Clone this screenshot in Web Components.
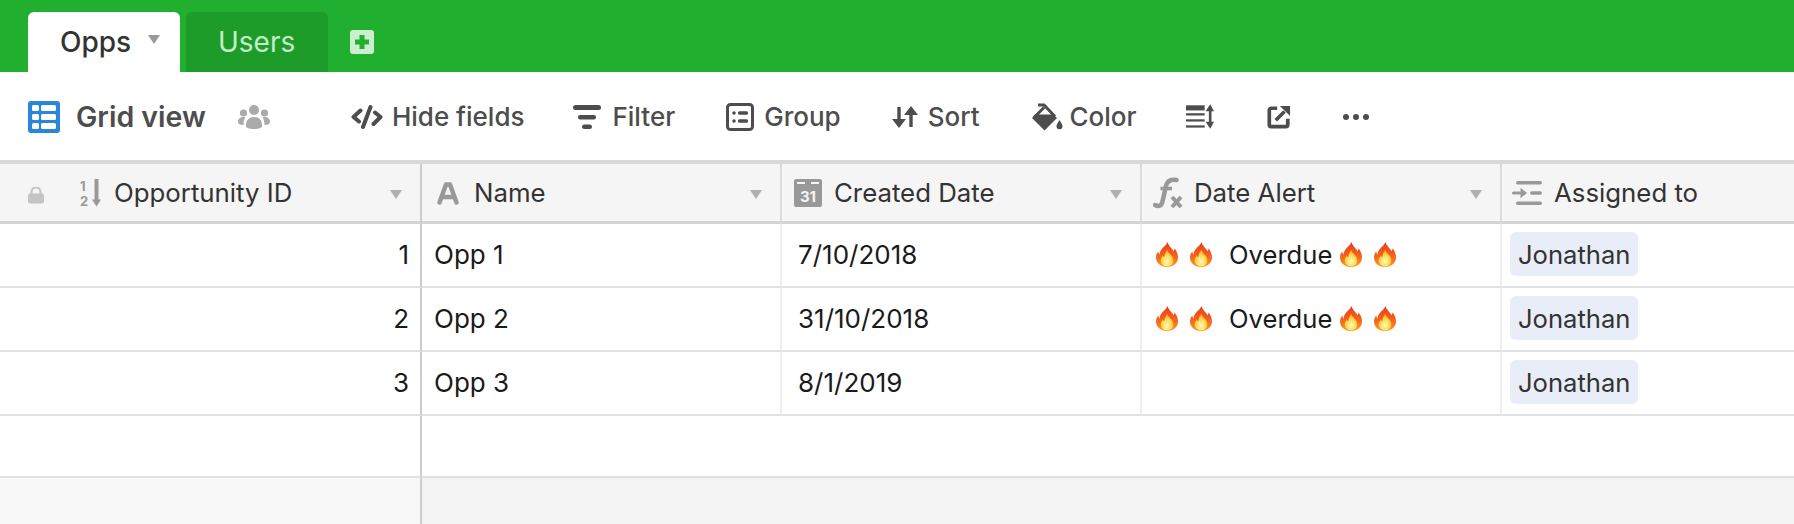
<!DOCTYPE html>
<html>
<head>
<meta charset="utf-8">
<title>Opps</title>
<style>
  html, body { margin: 0; height: 100%; overflow: hidden; background: #fff; }
  body { font-family: Inter, "Noto Sans", "Liberation Sans", sans-serif; }
</style>
</head>
<body>
<app-shell>
  <tab-bar>
    <tab-item active caret>Opps</tab-item>
    <tab-item>Users</tab-item>
  </tab-bar>
  <view-bar>
    <bar-button icon="hide" w="32" h="24" gap="9" ml="81">Hide fields</bar-button>
    <bar-button icon="filter" w="28" h="24" gap="11" ml="49">Filter</bar-button>
    <bar-button icon="group" w="28" h="28" gap="10" ml="51">Group</bar-button>
    <bar-button icon="sort" w="26" h="24" gap="10" ml="51">Sort</bar-button>
    <bar-button icon="color" w="32" h="28" gap="7" ml="51">Color</bar-button>
    <bar-button icon="rowheight" w="28" h="25" gap="0" ml="49"></bar-button>
    <bar-button icon="share" w="24" h="24" gap="0" ml="53"></bar-button>
    <bar-button icon="dots" w="26" h="6" gap="0" ml="52"></bar-button>
  </view-bar>
  <data-grid>
    <grid-head icon="number" iw="24" ih="32" gap="10" pad="80" lock>Opportunity ID</grid-head>
    <grid-head icon="text" iw="22" ih="24" gap="15" pad="15">Name</grid-head>
    <grid-head icon="date" iw="28" ih="28" gap="12" pad="12">Created Date</grid-head>
    <grid-head icon="formula" iw="30" ih="32" gap="11" pad="11">Date Alert</grid-head>
    <grid-head icon="link" iw="30" ih="24" gap="12" pad="10" last>Assigned to</grid-head>

    <grid-cell num>1</grid-cell><grid-cell>Opp 1</grid-cell><grid-cell date>7/10/2018</grid-cell>
    <grid-cell alert><overdue-flag></overdue-flag></grid-cell>
    <grid-cell pill last><name-pill>Jonathan</name-pill></grid-cell>

    <grid-cell num>2</grid-cell><grid-cell>Opp 2</grid-cell><grid-cell date>31/10/2018</grid-cell>
    <grid-cell alert><overdue-flag></overdue-flag></grid-cell>
    <grid-cell pill last><name-pill>Jonathan</name-pill></grid-cell>

    <grid-cell num>3</grid-cell><grid-cell>Opp 3</grid-cell><grid-cell date>8/1/2019</grid-cell>
    <grid-cell alert></grid-cell>
    <grid-cell pill last><name-pill>Jonathan</name-pill></grid-cell>
  </data-grid>
</app-shell>

<script>
const ICONS = {
  plus: `<rect width="24" height="24" rx="3" fill="#c9efcf"/><path d="M12 5v14M5 12h14" stroke="#20af2e" stroke-width="5"/>`,
  grid: `<rect width="32" height="32" rx="3" fill="#2b86d8"/><g fill="#fff"><rect x="4" y="4" width="7" height="6" rx="1.5"/><rect x="13" y="4" width="15" height="6" rx="1.5"/><rect x="4" y="13" width="7" height="6" rx="1.5"/><rect x="13" y="13" width="15" height="6" rx="1.5"/><rect x="4" y="22" width="7" height="6" rx="1.5"/><rect x="13" y="22" width="15" height="6" rx="1.5"/></g>`,
  users: `<g fill="#aaa"><circle cx="16" cy="5" r="5"/><circle cx="5.5" cy="8" r="3.6"/><circle cx="26.5" cy="8" r="3.6"/><path d="M8 21c0-6 3-9 8-9s8 3 8 9c0 2-3 3-8 3s-8-1-8-3z"/><path d="M0 17c0-3 2-5 5.5-5 1 0 1.5.2 2 .5C6 14.5 5.5 17 5.5 20 2 20 0 19 0 17z"/><path d="M32 17c0-3-2-5-5.5-5-1 0-1.5.2-2 .5 1.500 2 2 4.500 2 7.500 3.500 0 5.500-1 5.500-3z"/></g>`,
  hide: `<g fill="none" stroke="#4d4d4d" stroke-width="4" stroke-linecap="round" stroke-linejoin="round"><path d="M9.500 5.500 2.500 12l5.500 4.500"/><path d="M22.500 19 29.500 12l-5.500-4.500"/><path d="M19.500 2 12 22"/></g>`,
  filter: `<g fill="#4d4d4d"><rect width="28" height="5" rx="2.500"/><rect x="5" y="10" width="18" height="4.500" rx="2.200"/><rect x="9" y="19.500" width="10" height="4.500" rx="2.200"/></g>`,
  group: `<rect x="1.500" y="1.500" width="25" height="25" rx="3" fill="none" stroke="#4d4d4d" stroke-width="3"/><g fill="#4d4d4d"><circle cx="8" cy="10" r="1.800"/><circle cx="8" cy="18" r="1.800"/><rect x="12" y="8.300" width="10" height="3.400" rx="1.500"/><rect x="12" y="16.300" width="10" height="3.400" rx="1.500"/></g>`,
  sort: `<g fill="none" stroke="#4d4d4d" stroke-width="3.400"><path d="M7 2v19"/><path d="M19 22V3"/></g><g fill="#4d4d4d"><path d="M0 14h14l-7 9z"/><path d="M12 10h14l-7-9z"/></g>`,
  color: `<path d="M7 2h6l11 11.500M13 4.500 3 14.500" fill="none" stroke="#4d4d4d" stroke-width="3"/><path d="M4 11.500h18l4 3.500-12.500 12.500L1 15z" fill="#4d4d4d"/><path d="M28.500 17c1.300 2.500 3 4.300 3 6.300a3 3 0 0 1-6 0c0-2 1.700-3.800 3-6.300z" fill="#4d4d4d"/>`,
  rowheight: `<g fill="#4d4d4d"><rect width="20" height="5.500" y="1"/><rect width="20" height="2.400" y="9.500"/><rect width="20" height="2.400" y="16"/><rect width="20" height="2.400" y="22.500"/><rect x="24.500" y="3" width="2.800" height="20"/><path d="M21 7.500 25.900 0l4.100 7.500z"/><path d="M21 18.500 25.900 26l4.100-7.500z"/></g>`,
  share: `<path d="M11 3.500H4.500a2 2 0 0 0-2 2v16a2 2 0 0 0 2 2h16a2 2 0 0 0 2-2V15" fill="none" stroke="#4d4d4d" stroke-width="4"/><path d="M9.500 16.500 19 7" stroke="#4d4d4d" stroke-width="4" fill="none"/><path d="M14 1h11v11z" fill="#4d4d4d"/>`,
  dots: `<g fill="#4d4d4d"><circle cx="3" cy="3" r="3"/><circle cx="13" cy="3" r="3"/><circle cx="23" cy="3" r="3"/></g>`,
  lock: `<path d="M3.500 7V5a4.500 4.500 0 0 1 9 0v2" fill="none" stroke="#c4c4c4" stroke-width="2.200"/><rect y="6.500" width="16" height="10" rx="2" fill="#c4c4c4"/>`,
  number: `<text x="0" y="11.500" font-size="13" font-weight="700" fill="#999" font-family="Inter, sans-serif">1</text><text x="0" y="27" font-size="13" font-weight="700" fill="#999" font-family="Inter, sans-serif">2</text><rect x="14.500" y="0" width="4" height="22" fill="#999"/><path d="M12 20.500h9l-4.500 7z" fill="#999"/>`,
  text: `<path d="M2.500 21.500 9 3.500h4l6.500 18M6 16h10" fill="none" stroke="#999" stroke-width="4.500" stroke-linecap="round" stroke-linejoin="round"/>`,
  date: `<rect width="28" height="28" rx="2" fill="#999"/><rect x="3" y="3" width="8" height="2" fill="#f5f5f5"/><rect x="17" y="3" width="8" height="2" fill="#f5f5f5"/><text x="14" y="22.500" text-anchor="middle" font-size="15" font-weight="700" fill="#f5f5f5" font-family="Inter, sans-serif">31</text>`,
  formula: `<path d="M2 28c3.500 2 6.500 1 7.500-3.500L13 9c1.200-5.500 5-7 10.500-6" fill="none" stroke="#999" stroke-width="4.500" stroke-linecap="round"/><path d="M7.500 11.500h11.500" stroke="#999" stroke-width="3.600"/><path d="m19 20 9 10M28 20l-9 10" stroke="#999" stroke-width="4" fill="none"/>`,
  link: `<g fill="#999"><rect x="4" y="0" width="26" height="3.600" rx="1.800"/><rect x="4" y="20.400" width="26" height="3.600" rx="1.800"/><rect x="18" y="10.200" width="12" height="3.600" rx="1.800"/><rect x="0" y="10.400" width="10" height="3.200" rx="1.600"/><path d="M8.500 6.800 15 12l-6.500 5.200z"/></g>`,
  flame: `<defs><linearGradient id="fl" x1="0" y1="0" x2="0" y2="1"><stop offset="0" stop-color="#ea3c1c"/><stop offset=".6" stop-color="#f7661c"/><stop offset="1" stop-color="#fd9a22"/></linearGradient><radialGradient id="fi" cx=".5" cy=".7" r=".62"><stop offset="0" stop-color="#fff8c0"/><stop offset=".6" stop-color="#ffdc50"/><stop offset="1" stop-color="#fca524"/></radialGradient></defs><path d="M12 0c1 4 4 6 6.500 9.500.6-1 .8-2 .8-3 2.400 3 3.700 6 3.700 9.500C23 22 18.500 26 11.500 26S0 22 0 16c0-2.500 1-4.500 2.500-6.500 0 1.500.3 2.600 1.200 3.500C4 7 10 5 12 0z" fill="url(#fl)"/><path d="M12 8c.5 3 2.800 4.300 4.300 6.300 1 1.300 1.900 3 1.900 5 0 3.700-3 6.200-6.700 6.200S4.800 23 4.800 19.400c0-2 1.200-3.800 2.400-5 .4 1 .9 1.500 1.500 1.800C8.600 13 10.400 10 12 8z" fill="url(#fi)"/>`
};

function svgIcon(name, w, h) {
  const box = { plus: '0 0 24 24', grid: '0 0 32 32', users: '0 0 32 24', hide: '0 0 32 24', filter: '0 0 28 24',
    group: '0 0 28 28', sort: '0 0 26 24', color: '0 0 32 28', rowheight: '0 0 30 26', share: '0 0 26 26', dots: '0 0 26 6',
    lock: '0 0 16 17', number: '0 -2 24 32', text: '0 0 22 24', date: '0 0 28 28', formula: '0 0 30 32', link: '0 0 30 24', flame: '0 0 23 26' }[name];
  return `<svg xmlns="http://www.w3.org/2000/svg" width="${w}" height="${h}" viewBox="${box}" style="display:block;flex:none">${ICONS[name]}</svg>`;
}

class AppShell extends HTMLElement {
  constructor() {
    super();
    this.attachShadow({ mode: 'open' });
    this.shadowRoot.innerHTML = `
      <style>
        :host { display: flex; flex-direction: column; height: 524px; overflow: hidden; }
      </style>
      <slot></slot>
    `;
  }
}

class TabBar extends HTMLElement {
  constructor() {
    super();
    this.attachShadow({ mode: 'open' });
    this.shadowRoot.innerHTML = `
      <style>
        :host { display: flex; align-items: flex-end; height: 72px; flex: none; background: #20af2e; padding-left: 28px; box-sizing: border-box; }
        .add { align-self: flex-start; margin: 30px 0 0 22px; }
      </style>
      <slot></slot>
      <div class="add">${svgIcon('plus', 24, 24)}</div>
    `;
  }
}

class TabItem extends HTMLElement {
  constructor() {
    super();
    this.attachShadow({ mode: 'open' });
    this.shadowRoot.innerHTML = `
      <style>
        :host { display: flex; align-items: center; height: 60px; box-sizing: border-box; width: 142px; margin-left: 6px; padding: 0 0 1px 32px;
          background: #1e9c2a; color: #c1eec7; font-size: 28px; border-radius: 6px 6px 0 0; }
        :host([active]) { width: 152px; margin-left: 0; background: #fff; color: #333; font-weight: 500; }
        .caret { display: none; margin-left: 17px; margin-top: -4px; width: 0; height: 0; border-left: 6.5px solid transparent; border-right: 6.5px solid transparent; border-top: 9px solid #999; }
        :host([caret]) .caret { display: block; }
      </style>
      <slot></slot><span class="caret"></span>
    `;
  }
}

class ViewBar extends HTMLElement {
  constructor() {
    super();
    this.attachShadow({ mode: 'open' });
    this.shadowRoot.innerHTML = `
      <style>
        :host { display: flex; align-items: center; height: 88px; flex: none; box-sizing: border-box; padding: 1px 0 0 28px; background: #fff; color: #4d4d4d; }
        .name { font-size: 28.5px; font-weight: 600; margin-left: 16px; }
        .users { margin-left: 32px; }
      </style>
      ${svgIcon('grid', 32, 32)}
      <span class="name">Grid view</span>
      <span class="users">${svgIcon('users', 32, 24)}</span>
      <slot></slot>
    `;
  }
}

class BarButton extends HTMLElement {
  connectedCallback() {
    if (this.shadowRoot) return;
    this.attachShadow({ mode: 'open' });
    const a = (n) => this.getAttribute(n);
    this.shadowRoot.innerHTML = `
      <style>
        :host { display: flex; align-items: center; gap: ${a('gap')}px; margin-left: ${a('ml')}px; font-size: 26px; font-weight: 500; color: #4d4d4d; white-space: nowrap; }
      </style>
      ${svgIcon(a('icon'), a('w'), a('h'))}<slot></slot>
    `;
  }
}

class DataGrid extends HTMLElement {
  constructor() {
    super();
    this.attachShadow({ mode: 'open' });
    this.shadowRoot.innerHTML = `
      <style>
        :host { display: grid; flex: 1; grid-template-columns: 422px 360px 360px 360px 1fr; grid-template-rows: 60px repeat(3, 64px) 62px 1fr;
          border-top: 4px solid #d9d9d9; color: #1a1a1a; font-size: 26px; background: #fff; }
        .blank { border-bottom: 2px solid #e0e2e2; }
        .blank.first { border-right: 2px solid #cccccc; }
        .tail { background: #f3f3f3; }
        .tail.first { background: #f8f8f8; border-right: 2px solid #cccccc; }
      </style>
      <slot></slot>
      <div class="blank first"></div><div class="blank"></div><div class="blank"></div><div class="blank"></div><div class="blank"></div>
      <div class="tail first"></div><div class="tail"></div><div class="tail"></div><div class="tail"></div><div class="tail"></div>
    `;
  }
}

class GridHead extends HTMLElement {
  connectedCallback() {
    if (this.shadowRoot) return;
    this.attachShadow({ mode: 'open' });
    const a = (n) => this.getAttribute(n);
    const isLock = this.hasAttribute('lock');
    this.shadowRoot.innerHTML = `
      <style>
        :host { display: flex; align-items: center; box-sizing: border-box; background: #f5f5f5; color: #333; font-size: 25.8px;
          padding-left: ${a('pad')}px; padding-right: 18px; border-bottom: 3px solid #d4d4d4; border-right: 2px solid #dcdcdc; position: relative; }
        :host([lock]) { border-right-color: #cccccc; }
        :host([last]) { border-right: 0; }
        .type { margin-right: ${a('gap')}px; }
        .label { flex: 1; white-space: nowrap; }
        .caret { width: 0; height: 0; border-left: 6.5px solid transparent; border-right: 6.5px solid transparent; border-top: 9px solid #b0b0b0; margin-top: 3px; }
        :host([last]) .caret { display: none; }
        .lock { position: absolute; left: 28px; top: 23px; }
      </style>
      ${isLock ? `<span class="lock">${svgIcon('lock', 16, 17)}</span>` : ''}
      <span class="type">${svgIcon(a('icon'), a('iw'), a('ih'))}</span>
      <span class="label"><slot></slot></span>
      <span class="caret"></span>
    `;
  }
}

class GridCell extends HTMLElement {
  constructor() {
    super();
    this.attachShadow({ mode: 'open' });
    this.shadowRoot.innerHTML = `
      <style>
        :host { display: flex; align-items: center; box-sizing: border-box; padding: 0 0 2px 12px; border-bottom: 2px solid #e0e2e2; border-right: 2px solid #eeeeee; white-space: nowrap; }
        :host([num]) { justify-content: flex-end; padding: 0 11px 2px 0; border-right-color: #cccccc; }
        :host([date]) { padding-left: 16px; }
        :host([alert]) { padding-left: 14px; }
        :host([pill]) { padding-left: 8px; }
        :host([last]) { border-right: 0; }
      </style>
      <slot></slot>
    `;
  }
}

class OverdueFlag extends HTMLElement {
  constructor() {
    super();
    this.attachShadow({ mode: 'open' });
    const flame = svgIcon('flame', 22, 25);
    this.shadowRoot.innerHTML = `
      <style>
        :host { display: flex; align-items: center; font-size: 25.6px; }
        .f2 { margin-left: 12px; }
        .t { margin: 0 8px 0 17px; }
      </style>
      ${flame}<span class="f2">${flame}</span><span class="t">Overdue</span>${flame}<span class="f2">${flame}</span>
    `;
  }
}

class NamePill extends HTMLElement {
  constructor() {
    super();
    this.attachShadow({ mode: 'open' });
    this.shadowRoot.innerHTML = `
      <style>
        :host { display: flex; align-items: center; height: 44px; padding: 0 8px; border-radius: 6px; background: #e9edf8; color: #333; font-size: 25.6px; }
      </style>
      <slot></slot>
    `;
  }
}

customElements.define('app-shell', AppShell);
customElements.define('tab-bar', TabBar);
customElements.define('tab-item', TabItem);
customElements.define('view-bar', ViewBar);
customElements.define('bar-button', BarButton);
customElements.define('data-grid', DataGrid);
customElements.define('grid-head', GridHead);
customElements.define('grid-cell', GridCell);
customElements.define('overdue-flag', OverdueFlag);
customElements.define('name-pill', NamePill);
</script>
</body>
</html>
